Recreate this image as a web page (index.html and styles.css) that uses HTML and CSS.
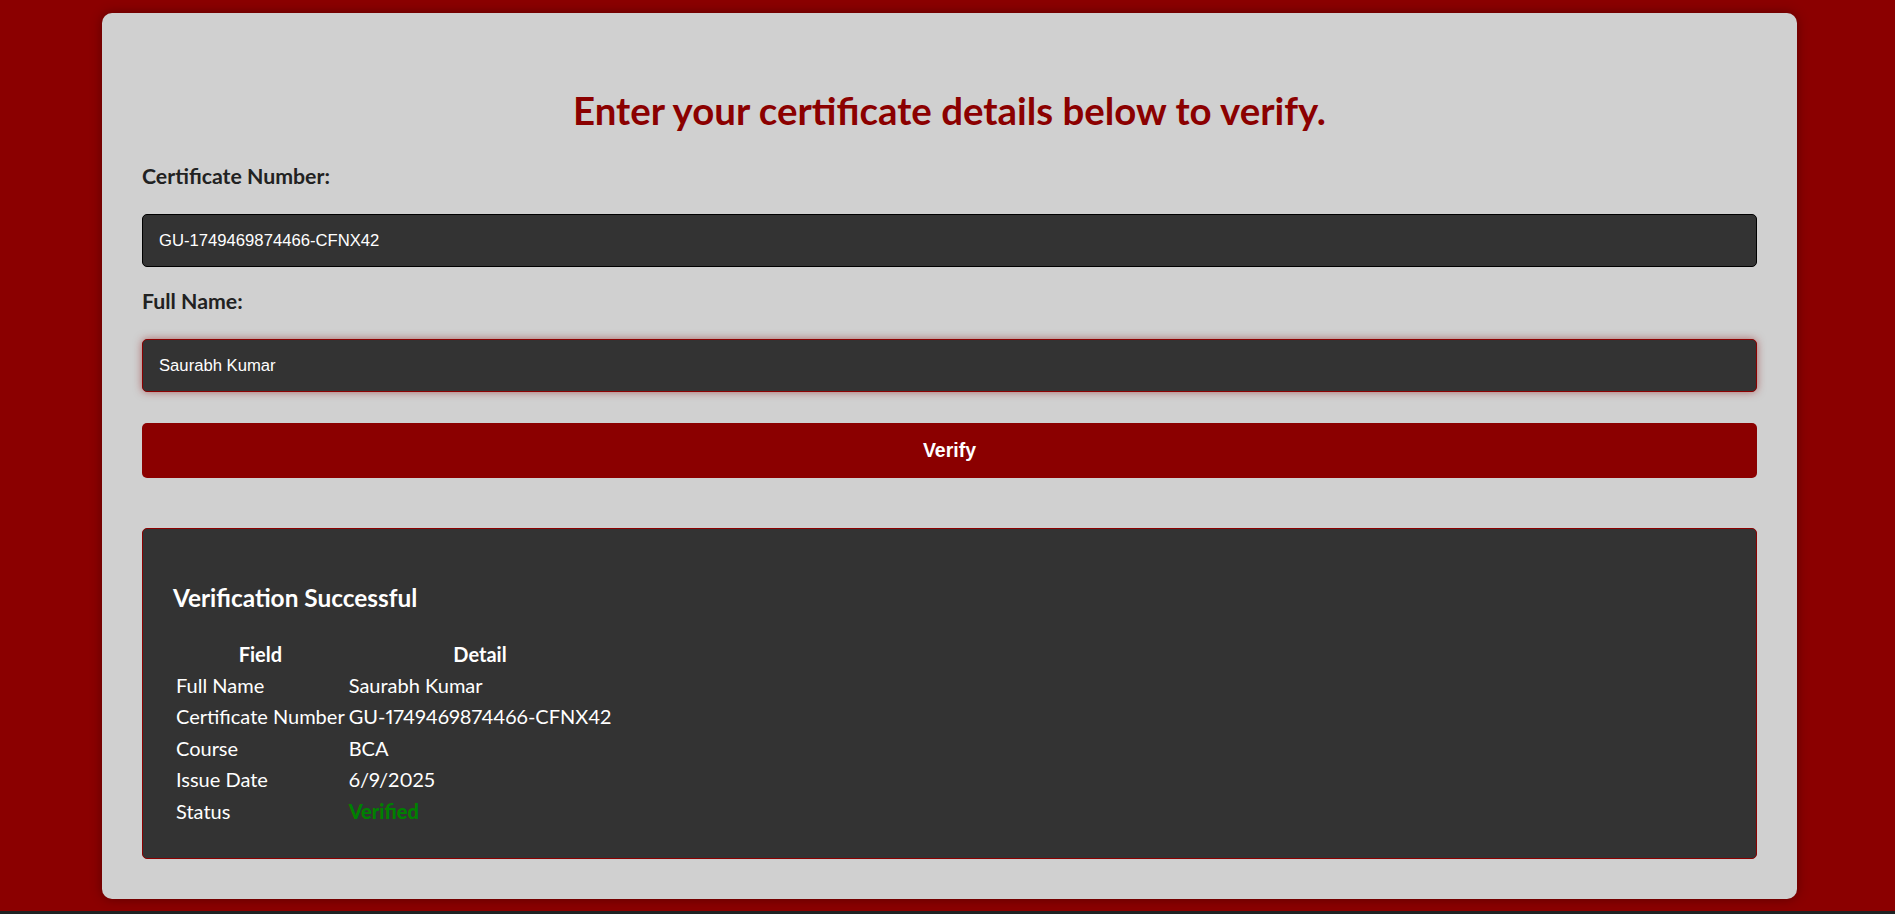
FILE: index.html
```html
<!DOCTYPE html>
<html lang="en">
<head>
<meta charset="utf-8">
<title>Certificate Verification</title>
<link rel="stylesheet" href="styles.css">
</head>
<body>
<div class="page">
  <main class="card">
    <h2 class="title">Enter your certificate details below to verify.</h2>
    <form class="form">
      <label class="label" for="cert">Certificate Number:</label>
      <input class="input" id="cert" type="text" value="GU-1749469874466-CFNX42">
      <label class="label" for="name">Full Name:</label>
      <input class="input input-active" id="name" type="text" value="Saurabh Kumar">
      <button class="btn" type="button">Verify</button>
    </form>
    <section class="result">
      <h3 class="result-title">Verification Successful</h3>
      <table class="result-table">
        <thead>
          <tr><th>Field</th><th>Detail</th></tr>
        </thead>
        <tbody>
          <tr><td>Full Name</td><td>Saurabh Kumar</td></tr>
          <tr><td>Certificate Number</td><td>GU-1749469874466-CFNX42</td></tr>
          <tr><td>Course</td><td>BCA</td></tr>
          <tr><td>Issue Date</td><td>6/9/2025</td></tr>
          <tr><td>Status</td><td class="status">Verified</td></tr>
        </tbody>
      </table>
    </section>
  </main>
</div>
</body>
</html>
```

FILE: styles.css
```css
html {
  background: #1f2223;
}

body {
  margin: 0;
  min-height: 911px;
  background: #8b0000;
  font-family: Lato, "Open Sans", sans-serif;
}

.page {
  padding: 13px 98px 0 102px;
}

.card {
  background: #d0d0d0;
  border-radius: 10px;
  padding: 40px;
  box-shadow: 0 0 12px rgba(0, 0, 0, 0.35);
}

.title {
  margin: 34px 0 30px;
  font-size: 38.4px;
  line-height: 46px;
  font-weight: 700;
  text-align: center;
  color: #8b0000;
}

.form {
  margin: 0;
}

.label {
  display: block;
  font-size: 21.3px;
  line-height: 26px;
  font-weight: 700;
  color: #222;
  margin-bottom: 25px;
}

.input {
  display: block;
  box-sizing: border-box;
  width: 100%;
  height: 53px;
  margin: 0 0 21px;
  padding: 0 16px;
  background: #333;
  color: #fff;
  border: 1px solid #000;
  border-radius: 5px;
  font-family: "Liberation Sans", Arial, sans-serif;
  font-size: 16.67px;
  outline: none;
}

.input-active {
  border-color: #8b0000;
  box-shadow: 0 0 8px rgba(139, 0, 0, 0.5);
}

.btn {
  display: block;
  width: 100%;
  height: 55px;
  margin-top: 31px;
  background: #8b0000;
  color: #fff;
  border: 0;
  border-radius: 5px;
  font-family: "Liberation Sans", Arial, sans-serif;
  font-size: 19.5px;
  font-weight: 700;
}

.result {
  margin-top: 50px;
  background: #333;
  border: 1px solid #8b0000;
  border-radius: 5px;
  padding: 30px;
  color: #fff;
}

.result-title {
  margin: 23px 0;
  font-size: 24.4px;
  line-height: 31px;
  font-weight: 700;
}

.result-table {
  margin-top: 0;
  border-spacing: 2px 2.5px;
  font-size: 20px;
  line-height: 27.5px;
  font-variant-numeric: proportional-nums;
}

.result-table th,
.result-table td {
  padding: 1px 1px;
}

.result-table th {
  font-weight: 700;
  text-align: center;
  padding: 3.4px 1px 0;
}

.result-table td {
  text-align: left;
}

.result-table td.status {
  color: #008000;
  font-weight: 900;
}
```
